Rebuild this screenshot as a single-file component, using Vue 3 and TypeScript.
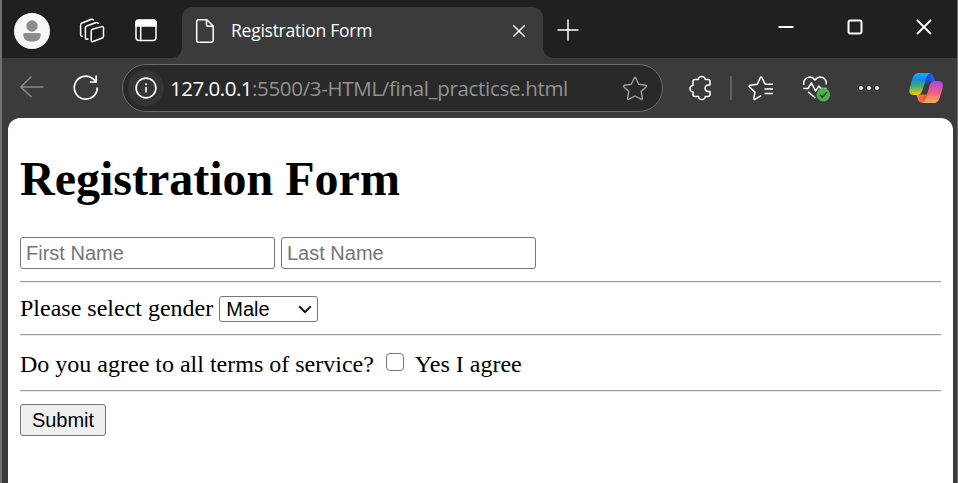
<script setup lang="ts">
import { ref } from 'vue'

const title = 'Registration Form'
const firstName = ref('')
const lastName = ref('')
const gender = ref('Male')
const agreed = ref(false)
</script>

<template>
  <div class="window">
    <header class="tabbar">
      <svg class="avatar" width="36" height="36" viewBox="0 0 36 36">
        <circle cx="18" cy="18" r="18" fill="#f7f7f7" />
        <circle cx="18" cy="13" r="5.7" fill="#8c8c8c" />
        <path d="M11 20h14q1.8 0 1.8 1.8C26.800 26.400 23 28.700 18 28.700S9.200 26.400 9.200 21.800Q9.200 20 11 20Z" fill="#8c8c8c" />
      </svg>
      <svg class="workspaces stroke" width="26" height="26" viewBox="79 18 26 26">
        <path d="M92.300 29.200 101.800 26.600Q103.500 26.200 103.500 28V36.300Q103.500 37.500 102.200 38L93.200 41.500Q91.200 42.200 91.200 40V31Q91.200 29.600 92.300 29.200Z" />
        <path d="M88.500 38.800 87 39.300Q85.400 39.500 85.400 37.500V27.800Q85.400 26.400 86.700 26L95.500 22.700Q97.800 22 98.300 24" />
        <path d="M82.800 36Q80.600 36.600 80.600 34.600V25Q80.600 23.600 82 23L90.800 19.500Q93.200 18.800 93.500 20.500" />
      </svg>
      <svg class="tabactions stroke" width="24" height="24" viewBox="134 18 24 24">
        <rect x="136" y="20.500" width="20" height="20" rx="3" />
        <path d="M136 21.500q.5-1.500 2-1.500h16q1.500 0 2 1.500V26H136Z" fill="#fff" />
        <path d="M140.700 26V40" />
      </svg>
      <div class="tab">
        <svg class="page-icon stroke" width="20" height="26" viewBox="195 18 20 26">
          <path d="M198.500 19.700H206.800L213.200 26V40Q213.200 42.300 211 42.300H198.500Q196.700 42.300 196.700 40.300V21.700Q196.700 19.700 198.500 19.700ZM206.500 20V24.500Q206.500 26.300 208.300 26.300H213" />
        </svg>
        <span class="tab-title">{{ title }}</span>
        <svg class="stroke" width="14" height="14" viewBox="0 0 14 14"><path d="M1.200 1.200 12.800 12.800M12.800 1.200 1.200 12.800" /></svg>
      </div>
      <svg class="plus stroke" width="22" height="22" viewBox="0 0 22 22"><path d="M.5 11H21.500M11 .5V21.500" /></svg>
      <div class="controls">
        <svg class="stroke" width="16" height="16" viewBox="0 0 16 16"><path d="M.5 8H15.500" stroke-width="2" /></svg>
        <svg class="stroke" width="16" height="16" viewBox="0 0 16 16"><rect x="1.500" y="1.500" width="13" height="13" rx="2" stroke-width="2" /></svg>
        <svg class="stroke" width="16" height="16" viewBox="0 0 16 16"><path d="M1 1 15 15M15 1 1 15" stroke-width="1.800" /></svg>
      </div>
    </header>

    <nav class="toolbar">
      <svg class="back" width="26" height="24" viewBox="19 75 26 24"><path d="M43.500 87H20.800M31.500 76.500 20.800 87 31.500 97" /></svg>
      <svg class="refresh stroke" width="28" height="28" viewBox="72 74 28 28">
        <path d="M97.300 87.500A11.500 11.500 0 1 1 92.300 78.200L96 81.500M96.200 75.500V82H89.800" stroke-width="1.700" />
      </svg>
      <div class="address">
        <svg width="36" height="36" viewBox="128 70 36 36">
          <circle cx="146" cy="88" r="18" fill="#353535" />
          <circle cx="146" cy="88" r="9.900" fill="none" stroke="#fff" stroke-width="1.600" />
          <path d="M146 87V92.500" stroke="#fff" stroke-width="1.600" /><circle cx="146" cy="84.300" r="1.050" fill="#fff" />
        </svg>
        <span class="url"><b>127.0.0.1</b>:5500/3-HTML/final_practicse.html</span>
        <svg class="star" width="26" height="26" viewBox="622 75 26 26">
          <path d="M634.200 78Q635 76.500 635.800 78L638.700 84.200L645.500 85.200Q647.200 85.600 646 86.900L641.200 91.600L642.400 98.300Q642.500 100 641 99.200L635 96L629 99.200Q627.500 100 627.600 98.300L628.800 91.600L624 86.900Q622.800 85.600 624.500 85.200L631.300 84.200Z" />
        </svg>
      </div>
      <svg class="puzzle stroke" width="24" height="26" viewBox="689 75 24 26">
        <path d="M695 79.500H698.300C698 75.500 705.500 75.500 705.200 79.500H708Q710 79.500 710 81.500V85H708.500C704 85.300 704 91.300 708.500 91.500H710V94.500Q710 96.500 708 96.500H705.200C705.500 100.500 698.300 100.500 698.600 96.500H695Q693 96.500 693 94.500V91.800C689 92 689 85.300 693 85.500V81.500Q693 79.500 695 79.500Z" />
      </svg>
      <i class="divider"></i>
      <svg class="fav stroke" width="26" height="26" viewBox="748 75 26 26">
        <path d="M773 84.300H765.300L762 77.800Q761 76.300 760.200 77.800L757.300 84.300L750.200 85.300Q748.400 85.800 749.800 87.200L755 92.200L753.800 98.200Q753.600 100 755.200 99.200L761.200 95.700M764.500 89H773M764.500 93.500H773" />
      </svg>
      <svg class="heart" width="30" height="28" viewBox="802 75 30 28">
        <g class="stroke"><path d="M803.800 84.800C802.800 77.500 811 74.500 815 80C819 74.500 827 77.500 826.200 84.500M803.300 88.500H808L811.500 83L815.500 91L819 86L821 88.500H826.500M808 91.800 815.300 98" /></g>
        <circle cx="823.300" cy="94.700" r="6.800" fill="#4caf50" />
        <path d="M819.900 95 822.300 97.200 826.800 92.300" fill="none" stroke="#243a25" stroke-width="1.500" />
      </svg>
      <svg class="dots" width="22" height="6" viewBox="0 0 22 6"><g fill="#fff"><circle cx="2.900" cy="3" r="1.900" /><circle cx="10.900" cy="3" r="1.900" /><circle cx="18.900" cy="3" r="1.900" /></g></svg>
      <svg class="copilot" width="36" height="32" viewBox="908 72 36 32">
        <defs>
          <linearGradient id="cl" x1="0" y1="0" x2="0" y2="1"><stop offset="0" stop-color="#23aef0" /><stop offset=".3" stop-color="#1687e0" /><stop offset=".62" stop-color="#49af75" /><stop offset="1" stop-color="#f3d000" /></linearGradient>
          <linearGradient id="cr" x1="0" y1="0" x2="0" y2="1"><stop offset="0" stop-color="#a34bea" /><stop offset=".5" stop-color="#ef5b91" /><stop offset="1" stop-color="#ffaf50" /></linearGradient>
          <linearGradient id="cb"><stop offset="0" stop-color="#1238b8" /><stop offset="1" stop-color="#2874ed" /></linearGradient>
          <linearGradient id="co"><stop offset="0" stop-color="#ff9348" /><stop offset="1" stop-color="#e8423c" /></linearGradient>
        </defs>
        <path d="M924 73H929Q932.500 73 933.600 77L934.500 80Q935.200 81.500 938 81.500H930Q926.500 82 925.500 85L921 85Z" fill="url(#cb)" />
        <path d="M914.500 94.500H929L924.600 103H922.500Q919 103 917.900 99L917 96.500Q916.500 94.500 913 94.500Z" fill="url(#co)" />
        <path d="M918 73H930Q927.500 74 926.500 77.500L922.500 90Q921 95 917 95H913.500Q908 95 909.700 88L912.300 79Q914 73 918 73Z" fill="url(#cl)" />
        <path d="M934.800 81H938.500Q944 81 942.600 88L940 97Q938 103 934 103H922Q925 102 926 98L929.800 85Q931 81 934.800 81Z" fill="url(#cr)" />
      </svg>
    </nav>

    <main class="page">
      <h1>{{ title }}</h1>
      <form @submit.prevent>
        <div class="names">
          <input v-model="firstName" class="field" type="text" placeholder="First Name">
          <input v-model="lastName" class="field" type="text" placeholder="Last Name">
        </div>
        <hr>
        <div class="gender">
          <label for="gender">Please select gender</label>
          <div class="select-wrap">
            <select id="gender" v-model="gender"><option>Male</option><option>Female</option></select>
            <svg class="chevron" width="14" height="9" viewBox="0 0 14 9"><path d="M1.200 1.300 7 7.100 12.800 1.300" /></svg>
          </div>
        </div>
        <hr>
        <div class="terms">
          <span class="question">Do you agree to all terms of service?</span>
          <input id="agree" v-model="agreed" class="check" type="checkbox">
          <label for="agree">Yes I agree</label>
        </div>
        <hr>
        <button type="submit">Submit</button>
      </form>
    </main>
  </div>
</template>

<style>
body { background: #3b3b3b; overflow: hidden; }
</style>

<style scoped>
* { box-sizing: border-box; }
svg { display: block; flex: none; }
.window { width: 958px; height: 483px; border-left: 2px solid #707070; border-right: 1px solid #707070; background: #3b3b3b; display: flex; flex-direction: column; overflow: hidden; }
.stroke { fill: none; stroke: #fff; stroke-width: 1.5; stroke-linejoin: round; }
.tabbar { height: 58px; flex: none; background: #202020; display: flex; align-items: flex-start; padding-left: 12px; }
.avatar { margin-top: 13px; }
.workspaces { margin: 18px 0 0 29px; }
.tabactions { margin: 18px 24px 0 29px; }
.tab { position: relative; width: 361px; height: 51px; margin-top: 7px; border-radius: 10px 10px 0 0; background: #3b3b3b; display: flex; align-items: center; padding: 0 17px 3px 13px; }
.tab::before, .tab::after { content: ''; position: absolute; bottom: 0; width: 10px; height: 10px; }
.tab::before { left: -10px; background: radial-gradient(circle at 0 0, transparent 9.5px, #3b3b3b 10px); }
.tab::after { right: -10px; background: radial-gradient(circle at 100% 0, transparent 9.5px, #3b3b3b 10px); }
.tab-title { font: 17.5px/24px "Open Sans", sans-serif; color: #fff; margin: -2px 0 0 16px; flex: 1; white-space: nowrap; letter-spacing: -0.25px; }
.plus { margin: 19px 0 0 14px; }
.controls { display: flex; gap: 53px; margin: 19px 25px 0 auto; }
.toolbar { height: 60px; flex: none; display: flex; align-items: center; padding-left: 17px; }
.back { fill: none; stroke: #898989; stroke-width: 1.5; margin-top: -2px; }
.refresh { margin: 0 22px 0 27px; }
.address { width: 541px; height: 48px; border: 1.5px solid #6b6b6b; border-radius: 24px; background: #292929; display: flex; align-items: center; padding: 0 14px 0 5px; }
.url { font: 20.5px/28px "Open Sans", sans-serif; color: #929292; margin-left: 6px; flex: 1; white-space: nowrap; letter-spacing: -0.32px; }
.url b { font-weight: 400; color: #fff; letter-spacing: -0.5px; }
.star { fill: none; stroke: #a0a0a0; stroke-width: 1.4; stroke-linejoin: round; }
.puzzle { margin-left: 26px; }
.divider { width: 2px; height: 24px; background: #626262; margin: 0 16px 0 17px; }
.heart { margin-left: 28px; margin-top: 2px; }
.dots { margin-left: 26px; }
.copilot { margin-left: 28px; }
.page { width: 945px; flex: 1; margin-left: 6px; padding: 33px 12px 0; background: #fff; border-radius: 12px 12px 0 0; color: #000; font: 24px/27px "Liberation Serif", serif; }
h1 { margin: 0 0 31px; font-size: 48px; line-height: 55px; font-weight: 700; }
.names { display: flex; gap: 6px; height: 32px; }
.field { width: 255px; height: 32px; border: 1px solid #767676; border-radius: 3px; padding: 1px 5px; font: 20px "Liberation Sans", sans-serif; }
.field::placeholder { color: #757575; }
hr { height: 2px; margin: 12px 0; border: 0; border-top: 1px solid #9a9a9a; background: #ececec; }
.gender { display: flex; height: 27px; align-items: flex-start; gap: 6px; }
.select-wrap { position: relative; margin-top: 1px; width: 99px; height: 26px; }
select { appearance: none; display: block; width: 99px; height: 26px; margin: 0; border: 1px solid #767676; border-radius: 3px; padding: 0 6px; background: #fff; color: #000; font: 20px/24px "Liberation Sans", sans-serif; }
.chevron { position: absolute; right: 6px; top: 9px; fill: none; stroke: #111; stroke-width: 2; pointer-events: none; }
.terms { display: flex; height: 27px; align-items: flex-start; margin-top: 15px; margin-bottom: 11px; }
.check { appearance: none; width: 18px; height: 18px; margin: 2px 11px 0 12px; border: 1.5px solid #767676; border-radius: 4px; background: #fff; }
button { display: block; width: 86px; height: 32px; border: 1px solid #767676; border-radius: 3px; background: #efefef; padding: 0; color: #000; font: 20px "Liberation Sans", sans-serif; }
</style>
